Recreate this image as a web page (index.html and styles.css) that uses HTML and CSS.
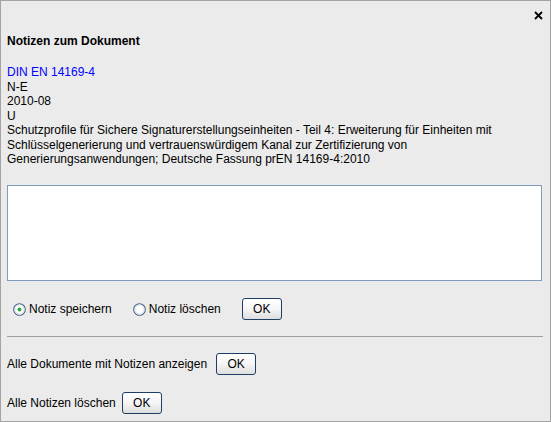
FILE: index.html
```html
<!DOCTYPE html>
<html lang="de">
<head>
<meta charset="utf-8">
<title>Notizen zum Dokument</title>
<link rel="stylesheet" href="styles.css">
</head>
<body>
<div class="window">
  <div class="topbar">
    <svg class="close" width="9" height="9" viewBox="0 0 9 9" aria-label="Schließen">
      <path d="M1 1 L8 8 M8 1 L1 8" stroke="#000" stroke-width="1.8" fill="none"/>
    </svg>
  </div>
  <div class="title">Notizen zum Dokument</div>
  <div class="info">
    <div class="link">DIN EN 14169-4</div>
    <div>N-E</div>
    <div>2010-08</div>
    <div>U</div>
    <div>Schutzprofile für Sichere Signaturerstellungseinheiten - Teil 4: Erweiterung für Einheiten mit Schlüsselgenerierung und vertrauenswürdigem Kanal zur Zertifizierung von Generierungsanwendungen; Deutsche Fassung prEN 14169-4:2010</div>
  </div>
  <div class="note"></div>
  <div class="row radios">
    <span class="radio">
      <svg width="13" height="13" viewBox="0 0 13 13"><circle cx="6.5" cy="6.5" r="5.8" fill="#fff" stroke="#3f5f86" stroke-width="1.1"/><circle cx="6.5" cy="6.5" r="4.6" fill="none" stroke="#d7dee8" stroke-width="1"/><circle cx="6.5" cy="6.5" r="2" fill="#2fa83a"/></svg>
      <span>Notiz speichern</span>
    </span>
    <span class="radio second">
      <svg width="13" height="13" viewBox="0 0 13 13"><circle cx="6.5" cy="6.5" r="5.8" fill="#fff" stroke="#3f5f86" stroke-width="1.1"/><circle cx="6.5" cy="6.5" r="4.6" fill="none" stroke="#d7dee8" stroke-width="1"/></svg>
      <span>Notiz löschen</span>
    </span>
    <button class="btn ok-first">OK</button>
  </div>
  <div class="sep"></div>
  <div class="row action first-action">
    <span>Alle Dokumente mit Notizen anzeigen</span>
    <button class="btn">OK</button>
  </div>
  <div class="row action second-action">
    <span>Alle Notizen löschen</span>
    <button class="btn">OK</button>
  </div>
</div>
</body>
</html>
```
FILE: styles.css
```css
html, body {
  margin: 0;
  padding: 0;
  background: #ebebeb;
}
.window {
  width: 551px;
  height: 422px;
  box-sizing: border-box;
  border: 1px solid #a3a3a3;
  background: #ebebeb;
  font-family: "Liberation Sans", Arial, sans-serif;
  font-size: 12px;
  color: #000;
  display: flex;
  flex-direction: column;
}
.topbar {
  height: 33px;
  box-sizing: border-box;
  display: flex;
  justify-content: flex-end;
  align-items: flex-start;
  padding: 10px 7px 0 0;
}
.close {
  display: block;
}
.title {
  font-weight: bold;
  line-height: 14.5px;
  margin-left: 6px;
}
.info {
  margin: 16.5px 8px 0 6px;
  line-height: 14.5px;
}
.link {
  color: #0000ff;
}
.note {
  margin: 18.5px 0 0 6px;
  width: 535px;
  height: 96px;
  box-sizing: border-box;
  border: 1px solid #7f9cbc;
  background: #fff;
}
.row {
  display: flex;
  align-items: center;
  height: 22px;
  margin-left: 6px;
}
.radios {
  margin-top: 17px;
  margin-left: 12px;
}
.radio {
  display: flex;
  align-items: center;
  gap: 3px;
}
.radio svg {
  display: block;
}
.second {
  margin-left: 21px;
}
.btn {
  width: 40px;
  height: 22px;
  box-sizing: border-box;
  border: 1px solid #1f3e66;
  border-radius: 3px;
  background: linear-gradient(#ffffff, #f5f5f5 50%, #dedede);
  font-family: "Liberation Sans", Arial, sans-serif;
  font-size: 12px;
  color: #000;
  padding: 0;
  margin: 0;
}
.ok-first {
  margin-left: 21px;
}
.sep {
  margin: 16px 0 0 6px;
  width: 536px;
  height: 1px;
  background: #a0a0a0;
}
.action {
  gap: 6px;
}
.first-action {
  margin-top: 16px;
  gap: 9px;
}
.second-action {
  margin-top: 17px;
}
```
